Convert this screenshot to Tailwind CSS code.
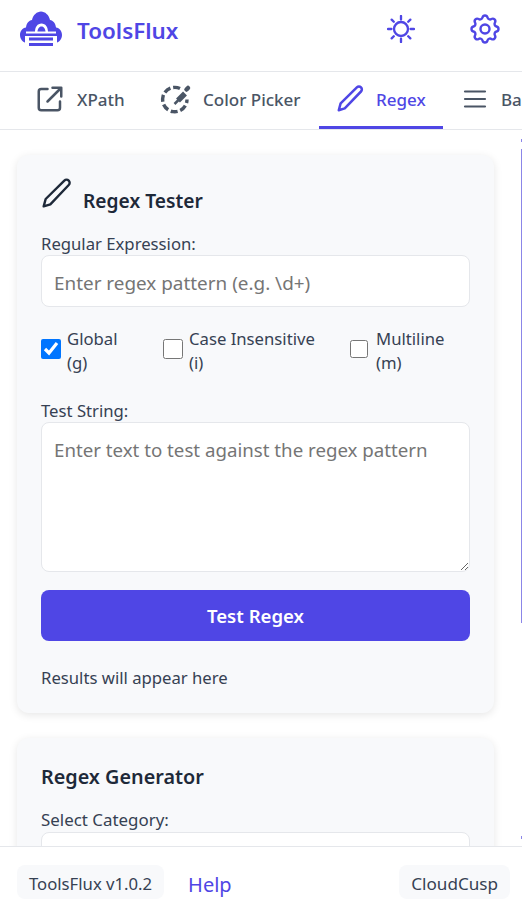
<!DOCTYPE html>
<html lang="en">
<head>
<meta charset="UTF-8">
<title>ToolsFlux</title>
<script src="https://cdn.jsdelivr.net/npm/@tailwindcss/browser@4"></script>
</head>
<body class="bg-white h-[899px] overflow-hidden flex flex-col font-['Noto_Sans',sans-serif] text-gray-800">
    <!-- header -->
    <header class="h-[72px] shrink-0 flex items-center border-b border-gray-200 pl-[20px] pr-[19px] pb-[14px]">
        <svg class="w-[42px] h-[36px] shrink-0" viewBox="0 0 42 36" fill="#4f46e5">
            <path d="M7 32C3 32 0 28 0 24c0-4 2.500-7 6-7.500C6.500 12 9 9.500 12 9c1-5 5-8.500 9-8.500s8 3.500 9 8.500c3 .5 5.500 3 6 7.500 3.500.5 6 3.500 6 7.500 0 4-3 8-7 8z"/>
            <path d="M5 25h32v11H5z" fill="#fff"/>
            <path d="M15 21c0-5 2.500-8.500 6.500-8.500S28 16 28 21h-2.500c0-3-1.500-5.500-4-5.500s-4 2.500-4 5.500z" fill="#fff"/>
            <path d="M6 20.500h30v2H6z" fill="#fff"/>
            <path d="M9 26.500h24v3H9zM9 32h24v3H9z"/>
        </svg>
        <span class="ml-[15px] mt-[4px] text-[22.4px] font-semibold text-[#4f46e5]">ToolsFlux</span>
        <div class="ml-auto flex items-center gap-[52px]">
            <svg class="w-[28px] h-[28px] text-[#4f46e5]" fill="none" viewBox="0 0 24 24" stroke="currentColor" stroke-width="2" stroke-linecap="round"><circle cx="12" cy="12" r="6"/><path d="M12 .8v3M12 20.200v3M.8 12h3M20.200 12h3M4 4l1.800 1.800M18.200 18.200 20 20M4 20l1.800-1.800M18.200 5.800 20 4"/></svg>
            <svg class="w-[36px] h-[36px] text-[#4f46e5]" fill="none" viewBox="0 0 24 24" stroke="currentColor" stroke-width="1.600" stroke-linecap="round" stroke-linejoin="round"><path d="M10.325 4.317c.426-1.756 2.924-1.756 3.350 0a1.724 1.724 0 002.573 1.066c1.543-.940 3.310.826 2.370 2.370a1.724 1.724 0 001.065 2.572c1.756.426 1.756 2.924 0 3.350a1.724 1.724 0 00-1.066 2.573c.940 1.543-.826 3.310-2.370 2.370a1.724 1.724 0 00-2.572 1.065c-.426 1.756-2.924 1.756-3.350 0a1.724 1.724 0 00-2.573-1.066c-1.543.940-3.310-.826-2.370-2.370a1.724 1.724 0 00-1.065-2.572c-1.756-.426-1.756-2.924 0-3.350a1.724 1.724 0 001.066-2.573c-.940-1.543.826-3.310 2.370-2.370.996.608 2.296.070 2.572-1.065z"/><circle cx="12" cy="12" r="3"/></svg>
        </div>
    </header>

    <!-- tabs -->
    <nav class="h-[58px] shrink-0 flex border-b border-gray-200 overflow-hidden text-[17px] font-medium text-gray-600">
        <div class="flex items-center shrink-0 w-[125px] pl-[35px] gap-[12px] border-b-[3px] border-transparent">
            <svg class="w-[30px] h-[30px] shrink-0" fill="none" viewBox="0 0 24 24" stroke="currentColor" stroke-width="2" stroke-linecap="round" stroke-linejoin="round"><path d="M10 4H5a2 2 0 00-2 2v13a2 2 0 002 2h13a2 2 0 002-2v-5M14 3h7v7M21 3 10 14"/></svg>
            <span class="mt-[2px]">XPath</span>
        </div>
        <div class="flex items-center shrink-0 w-[194px] pl-[35px] gap-[11px] border-b-[3px] border-transparent">
            <svg class="w-[32px] h-[32px] shrink-0" fill="none" viewBox="0 0 32 32" stroke="currentColor"><path d="M20 5.500a12.200 12.200 0 107 11" stroke-width="3.400" stroke-dasharray="7 2.800"/><path d="M18 17.500l7-7" stroke-width="5.500"/><path d="M14.500 21l4-4" stroke-width="2.500"/><path d="M26.500 6.500l1.500-1.500" stroke-width="4.500" stroke-linecap="round"/></svg>
            <span class="mt-[2px]">Color Picker</span>
        </div>
        <div class="flex items-center shrink-0 w-[124px] pl-[16px] gap-[11px] border-b-[3px] border-[#4f46e5] text-[#4f46e5]">
            <svg class="w-[30px] h-[30px] shrink-0" fill="none" viewBox="0 0 24 24" stroke="currentColor" stroke-width="2" stroke-linecap="round" stroke-linejoin="round"><path d="M3 21l1.500-5.500L17.500 2.700a2.300 2.300 0 013.300 3.300L7.800 19.500z"/></svg>
            <span class="mt-[2px]">Regex</span>
        </div>
        <div class="flex items-center shrink-0 pl-[20px] gap-[14px] border-b-[3px] border-transparent">
            <svg class="w-[24px] h-[24px] shrink-0" fill="none" viewBox="0 0 24 24" stroke="currentColor" stroke-width="2.200" stroke-linecap="round"><path d="M2 4.500h20M2 12h20M2 19.500h20"/></svg>
            <span class="mt-[2px]">Base64</span>
        </div>
    </nav>

    <!-- content -->
    <main class="flex-1 min-h-0 overflow-hidden pl-[17px] pr-[28px] pt-[25px] relative">
        <section class="bg-[#f8f9fb] rounded-xl shadow-[0_2px_8px_rgba(0,0,0,0.1)] pt-[24px] px-[24px] h-[558px]">
            <h2 class="flex items-end text-[19.2px] font-semibold text-gray-800 h-[36px]">
                <svg class="w-[32px] h-[32px] mr-[10px] mb-[6px] shrink-0" fill="none" viewBox="0 0 24 24" stroke="currentColor" stroke-width="1.800" stroke-linecap="round" stroke-linejoin="round"><path d="M2 22l1.500-5.500L17.500 2.700a2.300 2.300 0 013.300 3.300L7 20.500z"/></svg>
                <span class="leading-[28px]">Regex Tester</span>
            </h2>
            <label class="block text-[16.7px] leading-[23px] mt-[17px] text-gray-700">Regular Expression:</label>
            <input class="block w-full h-[52px] bg-white border border-gray-200 rounded-lg px-[12px] pt-[4px] text-[18.9px] placeholder:text-[#757575]" placeholder="Enter regex pattern (e.g. \d+)">
            <div class="flex mt-[20px] text-[16.7px] leading-[24px] text-gray-700">
                <label class="flex items-center w-[122px]"><input type="checkbox" checked class="w-[20px] h-[20px] mb-[4px] accent-[#0075ff] shrink-0"><span class="ml-[6px] w-[70px]">Global (g)</span></label>
                <label class="flex items-center w-[187px]"><input type="checkbox" class="w-[20px] h-[20px] mb-[4px] shrink-0"><span class="ml-[6px] w-[130px]">Case Insensitive (i)</span></label>
                <label class="flex items-center"><input type="checkbox" class="w-[18px] h-[18px] mb-[4px] shrink-0"><span class="ml-[8px] w-[80px]">Multiline (m)</span></label>
            </div>
            <label class="block text-[16.7px] leading-[23px] mt-[24px] text-gray-700">Test String:</label>
            <textarea class="block w-full h-[150px] bg-white border border-gray-200 rounded-lg px-[12px] pt-[13px] text-[18.7px] placeholder:text-[#757575]" placeholder="Enter text to test against the regex pattern"></textarea>
            <button class="block w-full h-[51px] mt-[18px] bg-[#4f46e5] text-white rounded-lg text-[18.6px] font-semibold">Test Regex</button>
            <p class="mt-[25px] text-[16.7px] leading-[24px] text-gray-700">Results will appear here</p>
        </section>
        <section class="bg-[#f8f9fb] rounded-xl shadow-[0_2px_8px_rgba(0,0,0,0.1)] pt-[24px] px-[24px] mt-[25px] h-[200px]">
            <h2 class="text-[19.8px] leading-[30px] font-semibold text-gray-800">Regex Generator</h2>
            <label class="block text-[16.9px] leading-[24px] mt-[16px] text-gray-700">Select Category:</label>
            <div class="h-[53px] bg-white border border-gray-200 rounded-lg"></div>
        </section>
        <!-- sliver of the scrollbar at the window edge -->
        <div class="absolute right-0 top-[9px] h-[3px] w-px bg-[#8b86e8]"></div>
        <div class="absolute right-0 top-[19px] h-[474px] w-px bg-[#8b86e8]"></div>
        <div class="absolute right-0 top-[706px] h-[3px] w-px bg-[#8b86e8]"></div>
    </main>

    <!-- footer -->
    <footer class="h-[53px] shrink-0 bg-white border-t border-gray-200 relative flex items-start pt-[18px] pl-[17px] pr-[12px] text-[16.7px] text-gray-700">
        <span class="bg-[#f8f9fb] rounded-lg px-[12px] h-[34px] leading-[38px]">ToolsFlux v1.0.2</span>
        <span class="ml-[24px] text-[20px] leading-[40px] text-[#4f46e5]">Help</span>
        <span class="ml-auto bg-[#f8f9fb] rounded-lg px-[12px] h-[34px] leading-[38px] text-[17.1px]">CloudCusp</span>
    </footer>
</body>
</html>
